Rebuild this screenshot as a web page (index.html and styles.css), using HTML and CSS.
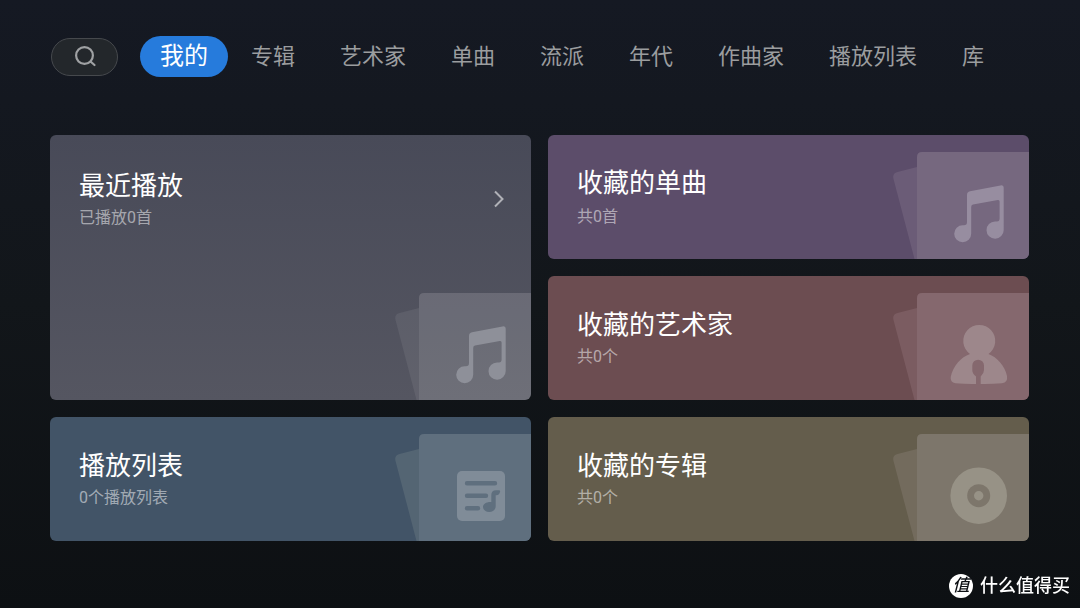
FILE: index.html
```html
<!DOCTYPE html>
<html lang="zh-CN">
<head>
<meta charset="utf-8">
<meta name="viewport" content="width=device-width, initial-scale=1">
<title>我的</title>
<link rel="stylesheet" href="styles.css">
</head>
<body>
<svg class="sprite" aria-hidden="true">
  <symbol id="sheets" viewBox="0 0 136 107">
    <path class="back" d="M24 15 4.500 20Q-1 21.500.500 27L21.500 107H24Z"/>
    <path class="front" d="M24 107V5Q24 0 29 0H136V107Z"/>
  </symbol>
  <symbol id="note" viewBox="0 0 136 107">
    <path d="M74 43Q74 39.800 77 39.200L107.500 33.400Q110.700 33 110.700 36V78A8.600 8.600 0 1 1 102 69.500H104Q106.600 69.500 106.600 66.500V49.500Q106.600 47.700 104.800 48L80 52.600Q78.200 53 78.200 55V81.700A8.500 8.500 0 1 1 69.700 73.200H71Q74 73.200 74 70Z"/>
  </symbol>
  <symbol id="artist" viewBox="0 0 136 107">
    <path d="M77 61A16 16 0 1 1 95.500 61C104 64 112 73 114 83Q115 89.500 109 90.300Q98 91.200 87.700 91V83.500Q91 80.500 91 77V72.500A5.800 5.800 0 0 0 79.300 72.500V77Q79.300 80.500 83 83.500V91Q73 91.200 62.500 90.300Q57 89.500 57.700 84C60 73 68 64 77 61Z"/>
  </symbol>
  <symbol id="list" viewBox="0 0 136 107">
    <rect x="62" y="37" width="48" height="50" rx="5"/>
    <path class="rule" d="M72 49.300H100M72 61.700H91M72 74.300H83"/>
    <path class="cut" d="M96.300 68V61Q96.300 56.300 101 56.300H104Q105.500 56.300 105 58Q104 61.300 101.500 61.300H100.700V72C100.700 76 97.500 78 94.300 78C90.500 78 88 75.800 88 73C88 70 91 67.800 96.300 68Z"/>
  </symbol>
  <symbol id="disc" viewBox="0 0 136 107">
    <circle cx="85.700" cy="61.700" r="28.300"/>
    <circle class="cut" cx="85.700" cy="61.700" r="11.500"/>
    <circle cx="85.700" cy="61.700" r="4.700"/>
  </symbol>
</svg>

<header class="topbar">
  <button class="search" type="button" aria-label="搜索">
    <svg width="24" height="24" viewBox="0 0 24 24" aria-hidden="true"><circle cx="11.500" cy="10.500" r="8.400"/><path d="M17.500 16.500 21.500 20"/></svg>
  </button>
  <nav class="tabs">
    <a class="tab tab-active" href="#" aria-current="page">我的</a>
    <a class="tab" href="#">专辑</a>
    <a class="tab" href="#">艺术家</a>
    <a class="tab" href="#">单曲</a>
    <a class="tab" href="#">流派</a>
    <a class="tab" href="#">年代</a>
    <a class="tab" href="#">作曲家</a>
    <a class="tab" href="#">播放列表</a>
    <a class="tab" href="#">库</a>
  </nav>
</header>

<main class="grid">
  <a class="card recent" href="#">
    <span class="title">最近播放</span>
    <span class="count">已播放0首</span>
    <svg class="chevron" width="12" height="18" viewBox="0 0 12 18" aria-hidden="true"><path d="M2 1.500 9.500 9 2 16.500"/></svg>
    <svg class="art" aria-hidden="true"><use href="#sheets"/><use class="icon" href="#note"/></svg>
  </a>
  <a class="card songs" href="#">
    <span class="title">收藏的单曲</span>
    <span class="count">共0首</span>
    <svg class="art" aria-hidden="true"><use href="#sheets"/><use class="icon" href="#note"/></svg>
  </a>
  <a class="card artists" href="#">
    <span class="title">收藏的艺术家</span>
    <span class="count">共0个</span>
    <svg class="art" aria-hidden="true"><use href="#sheets"/><use class="icon" href="#artist"/></svg>
  </a>
  <a class="card playlists" href="#">
    <span class="title">播放列表</span>
    <span class="count">0个播放列表</span>
    <svg class="art" aria-hidden="true"><use href="#sheets"/><use class="icon" href="#list"/></svg>
  </a>
  <a class="card albums" href="#">
    <span class="title">收藏的专辑</span>
    <span class="count">共0个</span>
    <svg class="art" aria-hidden="true"><use href="#sheets"/><use class="icon" href="#disc"/></svg>
  </a>
</main>

<footer class="brand">
  <span class="seal">值</span>
  <span>什么值得买</span>
</footer>
</body>
</html>
```
FILE: styles.css
```css
* {
  box-sizing: border-box;
}

body {
  margin: 0;
  min-height: 100vh;
  background: linear-gradient(#151923, #12161a 50%, #0d1013);
  color: #fff;
  font-family: Roboto, "Noto Sans CJK SC", sans-serif;
}

a {
  color: inherit;
  text-decoration: none;
}

.sprite {
  position: absolute;
  width: 0;
  height: 0;
}

.topbar {
  display: flex;
  align-items: center;
  gap: 22px;
  padding: 36px 51px 0;
}

.search {
  display: flex;
  align-items: center;
  justify-content: center;
  width: 67px;
  height: 38px;
  padding: 0;
  border: 1px solid #46494d;
  border-radius: 19px;
  background: #23272b;
}

.search svg {
  fill: none;
  stroke: #9fa1a3;
  stroke-width: 2.2;
  stroke-linecap: round;
}

.tabs {
  display: flex;
  align-items: center;
  gap: 45px;
  white-space: nowrap;
}

.tab {
  color: #9b9d9f;
  font-size: 22px;
  line-height: 41px;
}

.tab-active {
  margin-right: -22px;
  padding: 0 20px;
  border-radius: 21px;
  background: #267bdc;
  color: #fff;
  font-size: 24px;
}

.grid {
  display: grid;
  grid-template-columns: 1fr 1fr;
  grid-auto-rows: 124px;
  gap: 17px;
  padding: 58px 51px 67px 50px;
}

.card {
  position: relative;
  display: flex;
  flex-direction: column;
  gap: 7px;
  padding: 34px 29px;
  border-radius: 6px;
  overflow: hidden;
  background: var(--base);
}

.recent {
  --back: rgb(255 255 255 / 7%);
  --front: rgb(255 255 255 / 15%);
  --icon: #8e9099;
  grid-row: span 2;
  padding-top: 36px;
  background: linear-gradient(#484a58, #555661);
}

.songs {
  --base: #5c4d6a;
  --back: #6b5c77;
  --front: #76687f;
  --icon: #978da0;
  gap: 9px;
  padding-top: 33px;
}

.artists {
  --base: #6c4d51;
  --back: #7b5c61;
  --front: #85686e;
  --icon: #9d878b;
}

.playlists {
  --base: #425467;
  --back: #546573;
  --front: #5f6f7e;
  --icon: #808c98;
}

.albums {
  --base: #645d4c;
  --back: #736b5d;
  --front: #7d766b;
  --icon: #979286;
}

.title {
  font-size: 26px;
  line-height: 30px;
}

.count {
  color: rgb(255 255 255 / 52%);
  font-size: 16px;
  line-height: 20px;
}

.chevron {
  position: absolute;
  top: 55px;
  right: 26px;
  fill: none;
  stroke: #b0b1b7;
  stroke-width: 2;
}

.art {
  position: absolute;
  right: 0;
  bottom: 0;
  width: 136px;
  height: 107px;
}

.back {
  fill: var(--back);
}

.front {
  fill: var(--front);
}

.icon {
  fill: var(--icon);
}

.cut {
  fill: var(--front);
}

.rule {
  fill: none;
  stroke: var(--front);
  stroke-width: 4.4;
  stroke-linecap: round;
}

.brand {
  position: fixed;
  right: 10px;
  bottom: 10px;
  display: flex;
  align-items: center;
  gap: 7px;
  font-size: 18px;
  font-weight: 500;
  line-height: 25px;
}

.seal {
  width: 24px;
  height: 24px;
  border-radius: 50%;
  background: #fff;
  color: #0d1014;
  font-size: 17px;
  font-style: italic;
  line-height: 23px;
  text-align: center;
}
```
